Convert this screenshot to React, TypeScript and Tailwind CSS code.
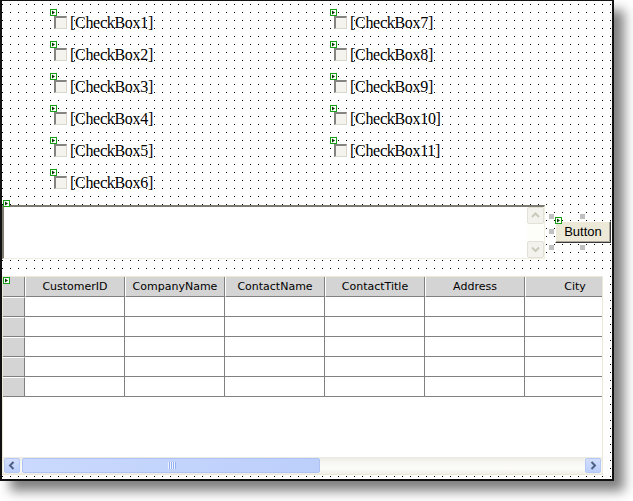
import React from 'react';

const leftBoxes = ['CheckBox1', 'CheckBox2', 'CheckBox3', 'CheckBox4', 'CheckBox5', 'CheckBox6'];
const rightBoxes = ['CheckBox7', 'CheckBox8', 'CheckBox9', 'CheckBox10', 'CheckBox11'];
const columns = ['CustomerID', 'CompanyName', 'ContactName', 'ContactTitle', 'Address', 'City'];

function SmartTag({ className = '' }: { className?: string }) {
  return (
    <svg width="7" height="7" viewBox="0 0 7 7" className={`block ${className}`}>
      <rect x="0.5" y="0.5" width="6" height="6" fill="#ffffff" stroke="#16a016" />
      <path d="M2 1.5 L5 3.5 L2 5.5 Z" fill="#0c3a0c" />
    </svg>
  );
}

function CheckItem({ label }: { label: string }) {
  return (
    <div className="relative h-8">
      <SmartTag className="absolute left-0 top-0" />
      <div className="flex items-start pl-1 pt-[5px]">
        <span className="mt-[2px] block h-[13px] w-[13px] shrink-0 border-l-2 border-t-2 border-r border-b border-l-[#858480] border-t-[#858480] border-r-[#d9d7cc] border-b-[#d9d7cc] bg-[#f4f3ee]" />
        <span className="ml-[3px] whitespace-nowrap font-['Liberation_Serif',serif] text-[16px] leading-[18px] tracking-[-0.3px] text-black">
          [{label}]
        </span>
      </div>
    </div>
  );
}

function Chevron({ dir, color }: { dir: 'up' | 'down' | 'left' | 'right'; color: string }) {
  const pts = {
    up: '1,6 4.5,2.5 8,6',
    down: '1,2.5 4.5,6 8,2.5',
    left: '5.5,1 2,4.5 5.5,8',
    right: '2.5,1 6,4.5 2.5,8',
  }[dir];
  return (
    <svg width="9" height="9" viewBox="0 0 9 9" className="block">
      <polyline points={pts} fill="none" stroke={color} strokeWidth="2" />
    </svg>
  );
}

function DisabledScrollBtn({ dir }: { dir: 'up' | 'down' }) {
  return (
    <div className="flex h-[17px] w-[17px] items-center justify-center rounded-[2px] border border-[#e3e1d7] bg-[#f3f2ec]">
      <Chevron dir={dir} color="#cbc9bd" />
    </div>
  );
}

function BlueScrollBtn({ dir }: { dir: 'left' | 'right' }) {
  return (
    <div className="flex h-[15px] w-[16px] shrink-0 items-center justify-center rounded-[2px] border border-[#b4c8f5] bg-[linear-gradient(to_bottom,#d2defd,#bccffb)]">
      <Chevron dir={dir} color="#4d6185" />
    </div>
  );
}

function DotGrid() {
  // designer surface snap grid: one black pixel every 8px
  return (
    <svg className="pointer-events-none absolute inset-0 h-full w-full" shapeRendering="crispEdges">
      <defs>
        <pattern id="snap" x="0" y="3" width="8" height="8" patternUnits="userSpaceOnUse">
          <rect x="0" y="0" width="1" height="1" fill="#000" />
        </pattern>
      </defs>
      <rect width="100%" height="100%" fill="url(#snap)" />
    </svg>
  );
}

export default function App() {
  return (
    <div className="h-[501px] w-[633px] bg-white">
      <div className="h-[481px] w-[614px] border-b-2 border-l-2 border-r-2 border-t border-[#111111] bg-white shadow-[10px_10px_11px_rgba(0,0,0,0.5)]">
        <div className="relative h-full w-full">
          <DotGrid />
          <div className="relative">
            {/* check boxes */}
            <div className="flex h-[199px] pl-[48px] pt-[8px]">
              <div className="w-[280px]">
                {leftBoxes.map((b) => (
                  <CheckItem key={b} label={b} />
                ))}
              </div>
              <div>
                {rightBoxes.map((b) => (
                  <CheckItem key={b} label={b} />
                ))}
              </div>
            </div>

            {/* text box + button */}
            <div className="relative flex h-[72px] items-start">
              <SmartTag className="absolute left-[1px] top-0 z-10" />
              <div className="mt-[5px] flex h-[54px] w-[543px] border-b border-l-2 border-r border-t-2 border-b-[#f1efe2] border-l-[#7d7b6f] border-r-[#f1efe2] border-t-[#7d7b6f] bg-white">
                <div className="flex-1" />
                <div className="flex w-[17px] flex-col justify-between bg-[#fdfdf9]">
                  <DisabledScrollBtn dir="up" />
                  <DisabledScrollBtn dir="down" />
                </div>
              </div>
              <div className="relative ml-[10px] mt-[21px]">
                <div className="flex h-[22px] w-[56px] items-center justify-center border border-b-[#3c3c3c] border-l-white border-r-[#3c3c3c] border-t-white bg-[#ece9d8] font-['Liberation_Sans',Arial,sans-serif] text-[13px] text-black shadow-[inset_-1px_-1px_0_#aca899]">
                  Button
                </div>
                <span className="absolute left-[-6px] top-[-7px] h-[5px] w-[5px] bg-[#c0c0c0]" />
                <span className="absolute left-[-6px] top-[8px] h-[5px] w-[5px] bg-[#c0c0c0]" />
                <span className="absolute left-[-6px] top-[24px] h-[5px] w-[5px] bg-[#c0c0c0]" />
                <span className="absolute left-[25px] top-[-7px] h-[5px] w-[5px] bg-[#c0c0c0]" />
                <span className="absolute left-[25px] top-[24px] h-[5px] w-[5px] bg-[#c0c0c0]" />
                <SmartTag className="absolute left-0 top-[-4px] z-10" />
              </div>
            </div>

            {/* data grid */}
            <div className="relative">
              <SmartTag className="absolute left-[1px] top-[1px] z-10" />
              <div className="mt-[4px] flex h-[199px] w-[601px] flex-col border border-[#ece9d8] bg-white">
                <div className="h-[180px] overflow-hidden font-['DejaVu_Sans',Verdana,sans-serif] text-[11px] text-black">
                  <div className="flex h-[20px]">
                    <div className="h-[20px] w-[22px] shrink-0 border-b border-r border-b-[#808080] border-r-[#808080] bg-[#d4d4d4]" />
                    {columns.map((c) => (
                      <div
                        key={c}
                        className="flex h-[20px] w-[100px] shrink-0 items-center justify-center border-b border-l border-r border-b-[#808080] border-l-white border-r-[#808080] bg-[#d4d4d4] pt-[2px]"
                      >
                        {c}
                      </div>
                    ))}
                  </div>
                  {[0, 1, 2, 3, 4].map((r) => (
                    <div key={r} className="flex h-[20px]">
                      <div className="h-[20px] w-[22px] shrink-0 border-b border-r border-t border-b-[#808080] border-r-[#808080] border-t-white bg-[#d4d4d4]" />
                      {columns.map((c) => (
                        <div key={c} className="h-[20px] w-[100px] shrink-0 border-b border-r border-[#808080] bg-white" />
                      ))}
                    </div>
                  ))}
                </div>
                <div className="flex h-[17px] items-center gap-[2px] bg-[linear-gradient(to_bottom,#ebe9e0,#f7f6f2_30%,#fcfcfa_70%,#efeee7)] px-[1px]">
                  <BlueScrollBtn dir="left" />
                  <div className="flex h-[15px] w-[298px] shrink-0 items-center justify-center gap-[1px] rounded-[2px] border border-[#aec3f4] bg-[linear-gradient(to_right,#cad9fd,#c3d4fc_50%,#bccffb)]">
                    {[0, 1, 2, 3].map((i) => (
                      <span key={i} className="block h-[7px] w-[1px] bg-[#eef3ff] shadow-[1px_0_0_#93b1f2]" />
                    ))}
                  </div>
                  <div className="flex-1" />
                  <BlueScrollBtn dir="right" />
                </div>
              </div>
            </div>
          </div>
        </div>
      </div>
    </div>
  );
}
